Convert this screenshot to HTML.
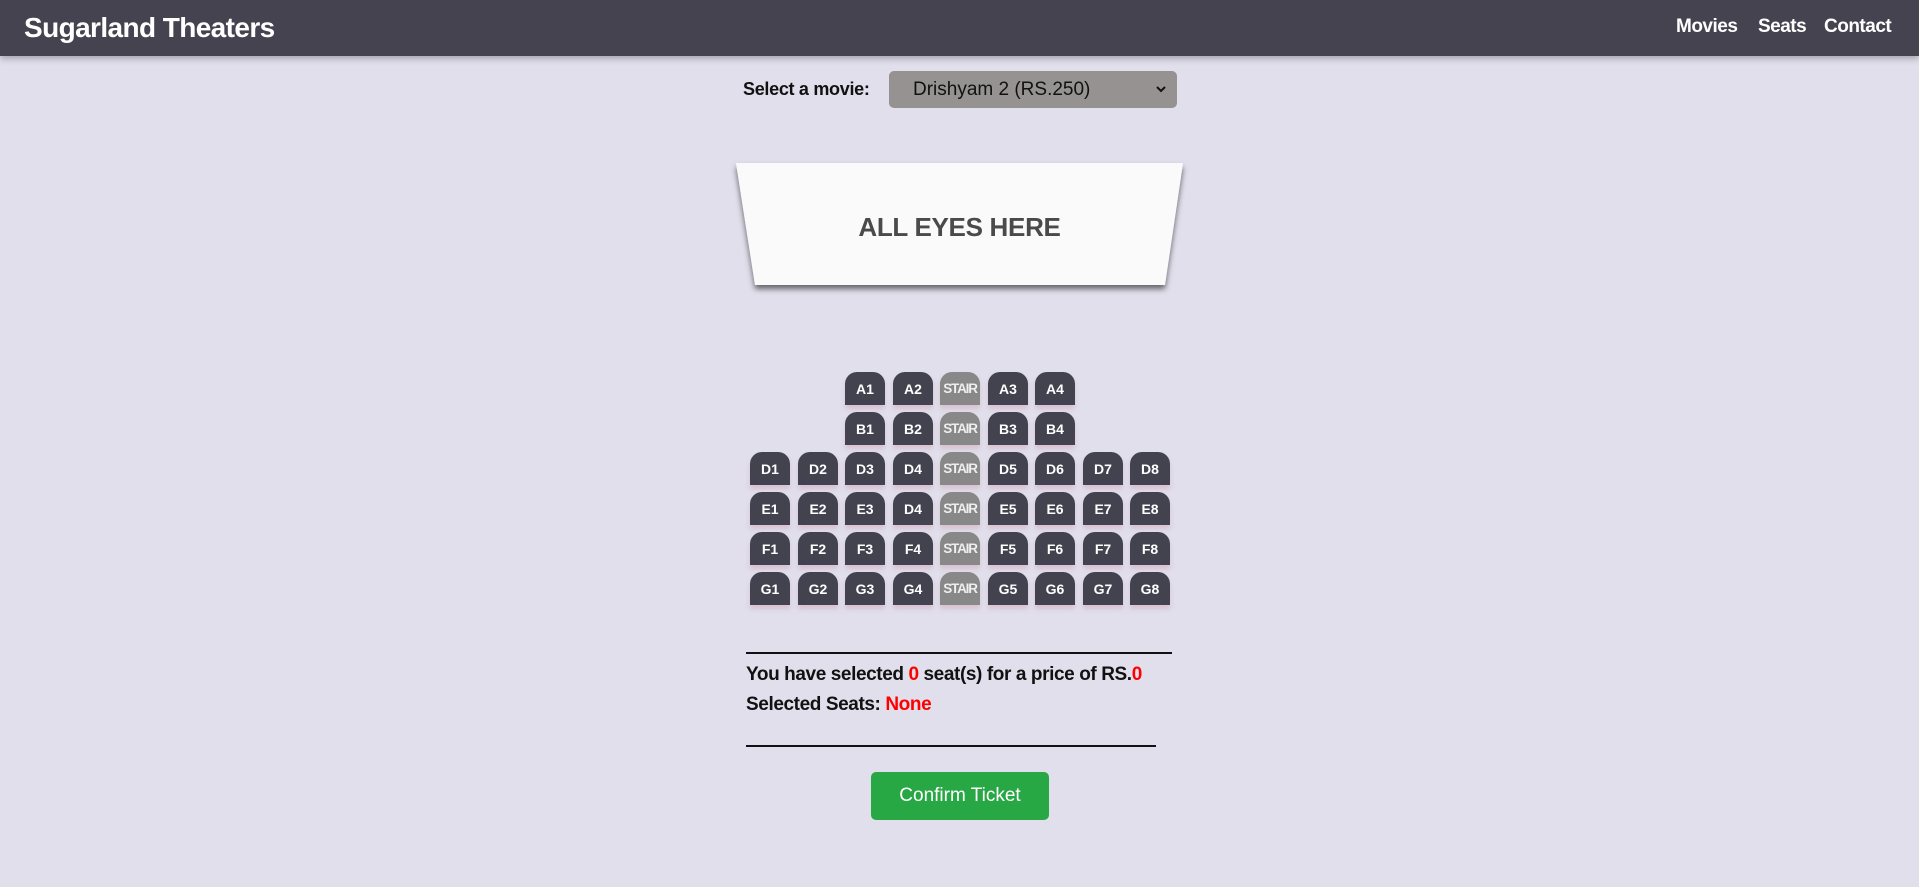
<!DOCTYPE html>
<html><head><meta charset="utf-8"><style>
*{margin:0;padding:0;box-sizing:border-box}
body{width:1919px;height:887px;background:#e0dfeb;font-family:"Liberation Sans",sans-serif;position:relative;overflow:hidden}
.nav{position:absolute;left:0;top:0;width:1919px;height:56px;background:#44434f;box-shadow:0 3px 6px rgba(0,0,0,.25)}
.t{position:absolute;color:#fff;font-weight:bold;white-space:nowrap}
.seat{position:absolute;width:40px;height:33px;background:#434350;border-radius:12px 12px 0 0;color:#fff;font-weight:bold;font-size:14px;display:flex;align-items:center;justify-content:center;box-shadow:0 4px 5px rgba(200,140,160,.35)}
.stair{background:#888;color:#eee;font-size:13.5px;letter-spacing:-1.2px;overflow:hidden}
</style></head><body>
<div class="nav"></div>
<div class="t" style="left:24px;top:12px;font-size:28px;letter-spacing:-0.6px">Sugarland Theaters</div>
<div class="t" style="left:1676px;top:16px;font-size:19px;letter-spacing:-0.5px">Movies</div>
<div class="t" style="left:1758px;top:16px;font-size:19px;letter-spacing:-0.5px">Seats</div>
<div class="t" style="left:1824px;top:16px;font-size:19px;letter-spacing:-0.5px">Contact</div>

<div style="position:absolute;left:743px;top:79px;font-size:18px;font-weight:bold;letter-spacing:-0.3px;color:#111">Select a movie:</div>
<div style="position:absolute;left:889px;top:71px;width:288px;height:37px;background:#969292;border-radius:5px;font-size:19px;color:#111">
<span style="position:absolute;left:24px;top:8px">Drishyam 2 (RS.250)</span>
<svg style="position:absolute;right:10px;top:14px" width="12" height="8" viewBox="0 0 12 8"><path d="M2 2l4 4 4-4" fill="none" stroke="#111" stroke-width="2"/></svg>
</div>

<svg style="position:absolute;left:730px;top:160px" width="460" height="135" viewBox="0 0 460 135">
<defs><filter id="f" x="-10%" y="-10%" width="120%" height="130%"><feDropShadow dx="0" dy="4" stdDeviation="3" flood-color="#000" flood-opacity="0.55"/></filter></defs>
<polygon points="6,3 453,3 435,125 25,125" fill="#fafafa" filter="url(#f)"/>
</svg>
<div style="position:absolute;left:736px;top:212px;width:447px;text-align:center;font-size:26px;font-weight:bold;color:#4a4a4a;letter-spacing:-0.3px">ALL EYES HERE</div>

<div id="seats"></div>
<script>
var xs=[750,798,845,893,940,988,1035,1083,1130];
var rows=[["A",372,[null,null,"A1","A2","S","A3","A4",null,null]],["B",412,[null,null,"B1","B2","S","B3","B4",null,null]],["D",452,["D1","D2","D3","D4","S","D5","D6","D7","D8"]],["E",492,["E1","E2","E3","D4","S","E5","E6","E7","E8"]],["F",532,["F1","F2","F3","F4","S","F5","F6","F7","F8"]],["G",572,["G1","G2","G3","G4","S","G5","G6","G7","G8"]]];
var h="";rows.forEach(function(r){r[2].forEach(function(s,i){if(!s)return;if(s=="S")h+='<div class="seat stair" style="left:'+xs[i]+'px;top:'+r[1]+'px">STAIR</div>';else h+='<div class="seat" style="left:'+xs[i]+'px;top:'+r[1]+'px">'+s+'</div>';});});
document.getElementById("seats").innerHTML=h;
</script>

<div style="position:absolute;left:746px;top:652px;width:426px;height:2px;background:#111"></div>
<div style="position:absolute;left:746px;top:664px;font-size:19px;font-weight:bold;letter-spacing:-0.4px;color:#111">You have selected <span style="color:#f00">0</span> seat(s) for a price of RS.<span style="color:#f00">0</span></div>
<div style="position:absolute;left:746px;top:694px;font-size:19px;font-weight:bold;letter-spacing:-0.4px;color:#111">Selected Seats: <span style="color:#f00">None</span></div>
<div style="position:absolute;left:746px;top:745px;width:410px;height:2px;background:#111"></div>

<div style="position:absolute;left:871px;top:772px;width:178px;height:48px;background:#28a745;border-radius:5px;color:#fff;font-size:19px;text-align:center;line-height:48px">Confirm Ticket</div>
</body></html>
